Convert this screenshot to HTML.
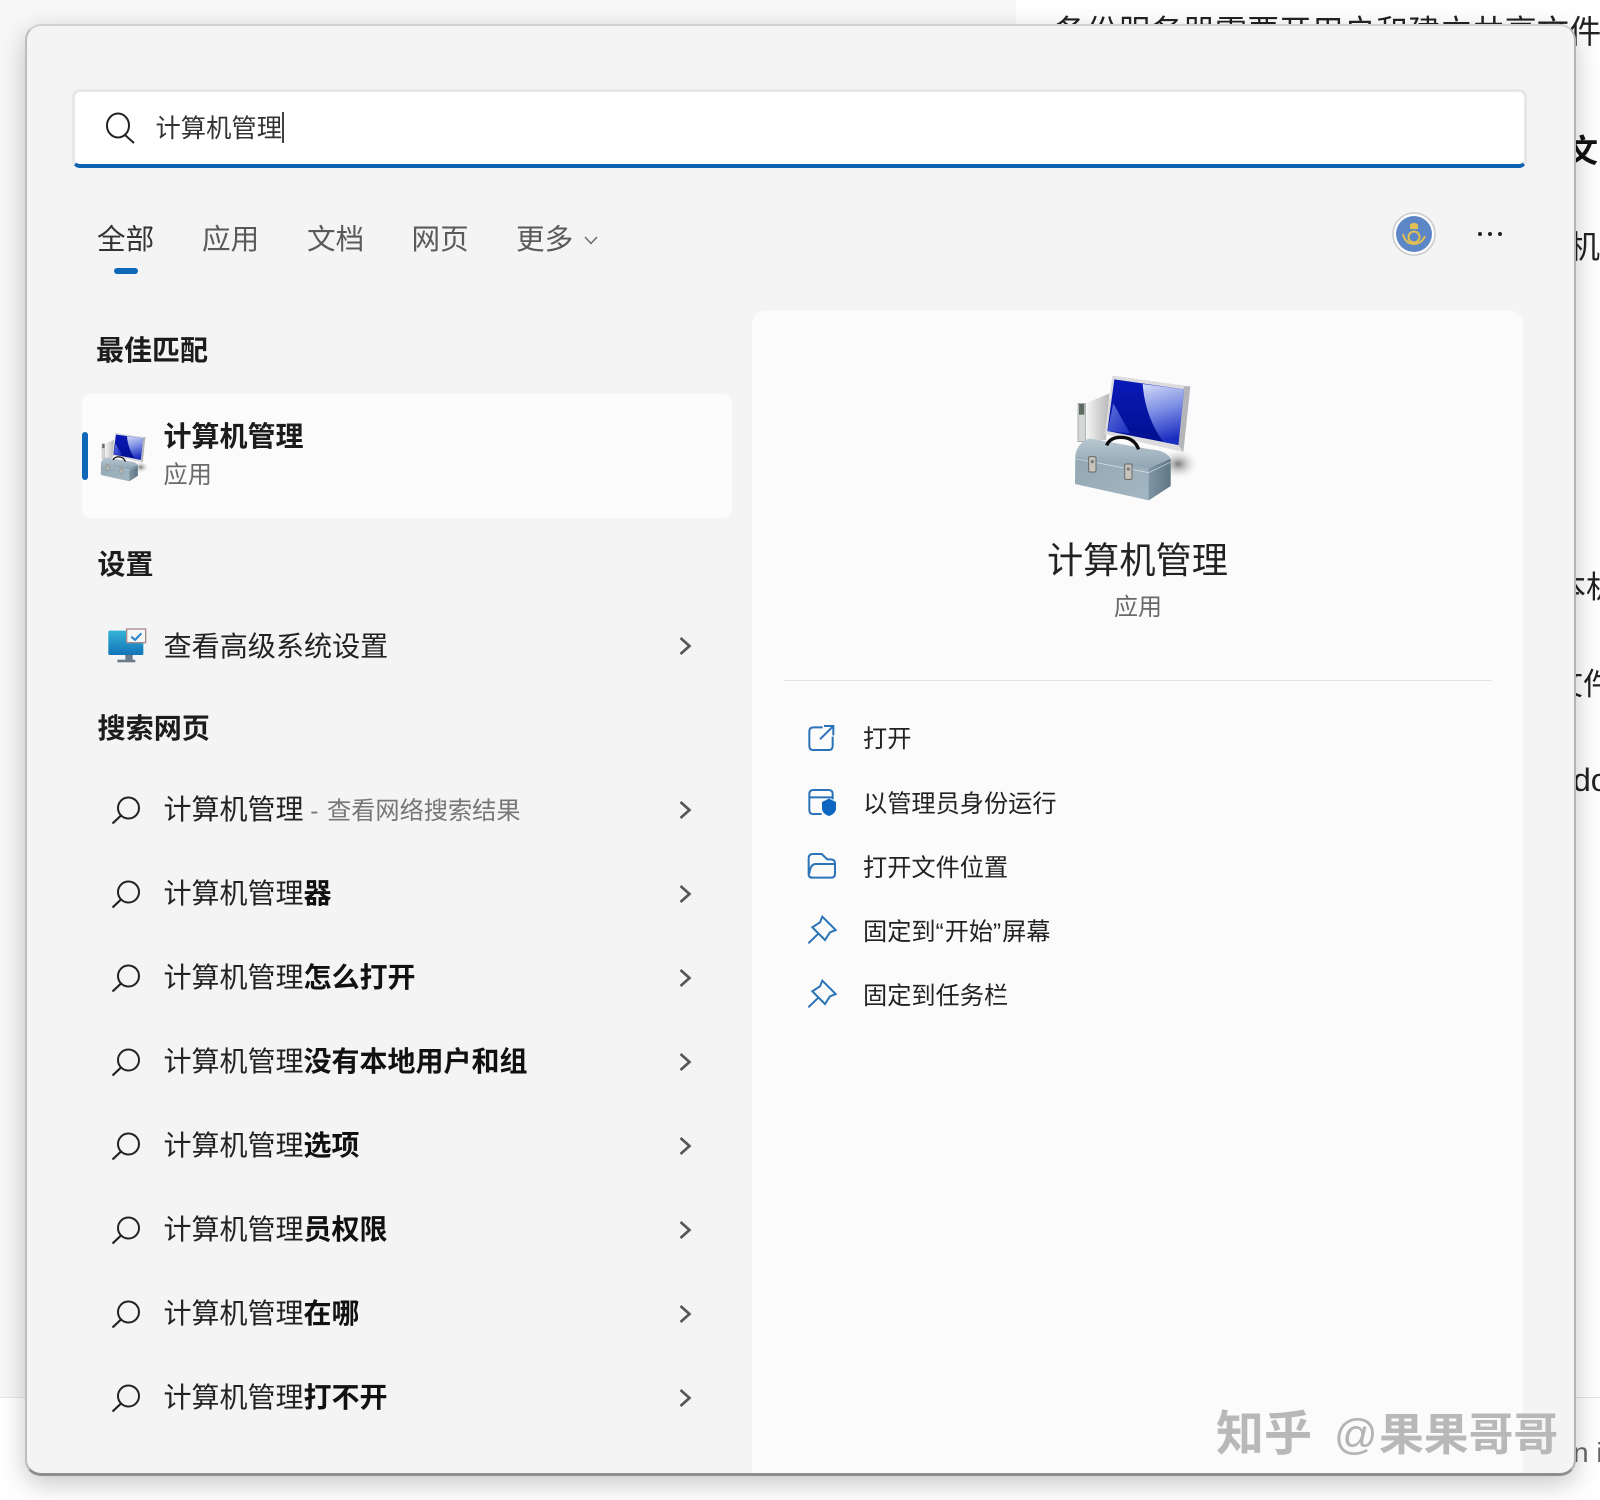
<!DOCTYPE html>
<html lang="zh-CN"><head><meta charset="utf-8"><title>计算机管理</title>
<style>
html,body{margin:0;padding:0;width:1600px;height:1500px;overflow:hidden;background:#fff}
body{position:relative;font-family:"Liberation Sans","Noto Sans CJK SC",sans-serif;color:#1c1c1c}
.t{position:absolute;white-space:nowrap;line-height:40px;height:40px}
.b{font-weight:700}
svg{position:absolute;overflow:visible}
#win{position:absolute;left:25px;top:24px;width:1547px;height:1447px;background:#f4f4f4;border-style:solid;border-width:2px 2px 3px 2px;border-color:#d2d2d2 #b4b4b4 #8e8e8e #bdbdbd;border-radius:16px;box-shadow:0 8px 26px rgba(0,0,0,.22)}
.bg{position:absolute}
</style></head><body>
<div class="bg" style="left:0;top:0;width:1016px;height:1397px;background:#f7f7f7"></div>
<div class="bg" style="left:0;top:1397px;width:1600px;height:1px;background:#e4e4e4"></div>
<div class="t" style="left:1054px;top:12px;font-size:32.200px;color:#222">备份服务器需要开用户和建立共享文件</div>
<div class="t b" style="left:1566px;top:131px;font-size:32px;color:#111">文</div>
<div class="t" style="left:1568px;top:227px;font-size:32px;color:#222">机</div>
<div class="t" style="left:1555px;top:568px;font-size:31px;color:#222">本机</div>
<div class="t" style="left:1552px;top:665px;font-size:31px;color:#222">文件</div>
<div class="t" style="left:1573px;top:760px;font-size:32px;color:#222">do</div>
<div class="t" style="left:1573px;top:1433px;font-size:28px;color:#666">n i</div>

<div id="win"></div>
<div class="bg" style="left:752px;top:310px;width:771px;height:1163px;background:#fbfbfb;border-radius:14px 14px 0 0"></div>

<!-- Search box -->
<div class="bg" style="left:72px;top:89px;width:1449px;height:72px;background:#fff;border:3px solid #e7e7e7;border-bottom:4px solid #0f62b0;border-radius:8px"></div>
<svg style="left:0;top:0" width="1600" height="1500" viewBox="0 0 1600 1500" fill="none">
<ellipse cx="118" cy="125.500" rx="11" ry="12" stroke="#222" stroke-width="2"/><path d="M125 135L134 143" stroke="#222" stroke-width="2"/>
<path d="M283 112V143" stroke="#111" stroke-width="1.600"/>
<path d="M585 237L591 243.500L597 237" stroke="#666" stroke-width="1.400"/>
</svg>
<div class="t" style="left:155.500px;top:109px;font-size:25.300px;color:#333">计算机管理</div>

<!-- Tabs -->
<div class="t" style="left:97px;top:220px;font-size:28.600px;color:#333">全部</div>
<div class="t" style="left:202px;top:220px;font-size:28.600px;color:#5a5a5a">应用</div>
<div class="t" style="left:307px;top:220px;font-size:28.600px;color:#5a5a5a">文档</div>
<div class="t" style="left:411.500px;top:220px;font-size:28.600px;color:#5a5a5a">网页</div>
<div class="t" style="left:516px;top:220px;font-size:28.600px;color:#5a5a5a">更多</div>
<div class="bg" style="left:114px;top:268px;width:24px;height:6px;border-radius:3px;background:#0f67b8"></div>

<!-- Avatar & dots -->
<svg style="left:1390px;top:210px" width="48" height="48" viewBox="0 0 48 48" fill="none">
<circle cx="24" cy="24" r="21" fill="#fff" stroke="#cfcfcf" stroke-width="1.800"/>
<circle cx="24" cy="24" r="18" fill="#5d86c6"/>
<circle cx="24" cy="27" r="5.500" stroke="#e2bf52" stroke-width="2"/>
<path d="M13 24Q15 33.500 24 34Q32 33.500 35 26" stroke="#e2bf52" stroke-width="2"/>
<path d="M20 19V14.500Q24 11 28 14.500V19Z" fill="#e2bf52"/>
</svg>
<svg style="left:1470px;top:226px" width="40" height="16" viewBox="0 0 40 16" fill="#222">
<circle cx="10" cy="8" r="2"/><circle cx="20" cy="8" r="2"/><circle cx="30" cy="8" r="2"/>
</svg>

<!-- Left column -->
<div class="t b" style="left:96px;top:331px;font-size:28px">最佳匹配</div>
<div class="bg" style="left:82px;top:394px;width:650px;height:124px;background:#fbfbfb;border-radius:8px"></div>
<div class="bg" style="left:82px;top:432px;width:6px;height:48px;border-radius:3px;background:#0f67b8"></div>
<div class="t b" style="left:163.500px;top:417px;font-size:28px">计算机管理</div>
<div class="t" style="left:163.500px;top:455.500px;font-size:24.200px;color:#6a6a6a">应用</div>

<div class="t b" style="left:97.500px;top:545px;font-size:28px">设置</div>
<div class="t" style="left:163.500px;top:627px;font-size:28.100px;color:#222">查看高级系统设置</div>
<div class="t b" style="left:97.500px;top:709px;font-size:28.100px">搜索网页</div>

<div class="t" style="left:163.500px;top:790px;font-size:28px;color:#222">计算机管理<span style="font-size:24.200px;color:#767676"> - <span style="margin-left:2px">查看网络搜索结果</span></span></div>
<div class="t" style="left:163.500px;top:874px;font-size:28px;color:#222">计算机管理<b style="color:#111">器</b></div>
<div class="t" style="left:163.500px;top:958px;font-size:28px;color:#222">计算机管理<b style="color:#111">怎么打开</b></div>
<div class="t" style="left:163.500px;top:1042px;font-size:28px;color:#222">计算机管理<b style="color:#111">没有本地用户和组</b></div>
<div class="t" style="left:163.500px;top:1126px;font-size:28px;color:#222">计算机管理<b style="color:#111">选项</b></div>
<div class="t" style="left:163.500px;top:1210px;font-size:28px;color:#222">计算机管理<b style="color:#111">员权限</b></div>
<div class="t" style="left:163.500px;top:1294px;font-size:28px;color:#222">计算机管理<b style="color:#111">在哪</b></div>
<div class="t" style="left:163.500px;top:1378px;font-size:28px;color:#222">计算机管理<b style="color:#111">打不开</b></div>

<svg style="left:0;top:0" width="1600" height="1500" viewBox="0 0 1600 1500" fill="none">
<defs>
<g id="mag"><circle cx="128.500" cy="-1" r="10.500" stroke="#222" stroke-width="2"/><path d="M121 6.500L112.500 14.500" stroke="#222" stroke-width="2.200"/></g>
<path id="chev" d="M680.500 -8L689.500 0L680.500 8" stroke="#555" stroke-width="2.600"/>
</defs>
<use href="#mag" y="809"/><use href="#mag" y="893"/><use href="#mag" y="977"/><use href="#mag" y="1061"/><use href="#mag" y="1145"/><use href="#mag" y="1229"/><use href="#mag" y="1313"/><use href="#mag" y="1397"/>
<use href="#chev" y="646"/><use href="#chev" y="810"/><use href="#chev" y="894"/><use href="#chev" y="978"/><use href="#chev" y="1062"/><use href="#chev" y="1146"/><use href="#chev" y="1230"/><use href="#chev" y="1314"/><use href="#chev" y="1398"/>
</svg>

<!-- Settings icon -->
<svg style="left:80px;top:600px" width="260" height="240" viewBox="0 0 780 720" fill="none">
<defs><linearGradient id="mon" x1="0" y1="0" x2="0" y2="1"><stop offset="0" stop-color="#35b4d6"/><stop offset="1" stop-color="#1273b8"/></linearGradient></defs>
<rect x="85" y="92" width="105" height="73" rx="4" fill="url(#mon)"/>
<rect x="136" y="165" width="22" height="16" fill="#6b7d8c"/>
<rect x="112" y="179" width="54" height="8" fill="#6b7d8c"/>
<rect x="140" y="87" width="57" height="41" fill="#f6f6f6" stroke="#a58a8a" stroke-width="4"/>
<path d="M154 110L165 120L184 100" stroke="#2c80c4" stroke-width="6"/>
</svg>

<!-- Toolbox icons -->
<svg style="left:1050px;top:360px" width="170" height="150" viewBox="0 0 510 450">
<defs>
<linearGradient id="scr" x1="0" y1="0" x2="0" y2="1"><stop offset="0" stop-color="#0a1ab8"/><stop offset="1" stop-color="#00108e"/></linearGradient>
<linearGradient id="hl" x1="0" y1="0" x2=".2" y2="1"><stop offset="0" stop-color="#d4dcf6"/><stop offset=".5" stop-color="#7a8ce4"/><stop offset="1" stop-color="#1c2ec0"/></linearGradient>
<linearGradient id="st" x1="0" y1="0" x2="1" y2="1"><stop offset="0" stop-color="#5f74dc"/><stop offset="1" stop-color="#1a2cc0"/></linearGradient>
<linearGradient id="lid" x1="0" y1="0" x2="0" y2="1"><stop offset="0" stop-color="#b9c9d2"/><stop offset="1" stop-color="#8fa5b2"/></linearGradient>
<linearGradient id="frt" x1="0" y1="0" x2="1" y2="1"><stop offset="0" stop-color="#8fa4b0"/><stop offset="1" stop-color="#a6bac5"/></linearGradient>
<linearGradient id="rgt" x1="0" y1="0" x2="1" y2="0"><stop offset="0" stop-color="#7f95a3"/><stop offset="1" stop-color="#5f7684"/></linearGradient>
<linearGradient id="sha" x1="0" y1="0" x2="1" y2="0"><stop offset="0" stop-color="#f5f5f5"/><stop offset="1" stop-color="#b8b8b8"/></linearGradient>
<radialGradient id="sh2"><stop offset="0" stop-color="#7c7c7c"/><stop offset="1" stop-color="#fbfbfb" stop-opacity="0"/></radialGradient>
<g id="tb">
<ellipse cx="385" cy="312" rx="64" ry="48" fill="url(#sh2)"/>
<polygon points="108,130 178,100 168,240 108,245" fill="url(#sha)"/>
<rect x="84" y="130" width="22" height="115" fill="#d4d6d7" stroke="#8f9698" stroke-width="2"/>
<rect x="87" y="132" width="16" height="32" fill="#5e6a60"/>
<polygon points="187,47 421,79 400,276 164,222" fill="#dcdcde"/>
<polygon points="402,79 421,79 400,276 385,255" fill="#b4b6ba"/>
<polygon points="193,58 402,88 385,255 172,213" fill="url(#scr)"/>
<path d="M278 72L402 88L385 255L340 246Q285 170 278 72Z" fill="url(#hl)"/>
<polygon points="190,130 240,220 172,213" fill="url(#st)"/>
<path d="M76 290Q80 250 118 236L300 268Q355 272 362 300L362 378L296 421L75 372Z" fill="url(#frt)"/>
<path d="M76 290Q80 250 118 236L300 268Q350 272 362 300L296 326Z" fill="url(#lid)"/>
<polygon points="296,326 362,296 362,378 296,421" fill="url(#rgt)"/>
<path d="M76 296L296 338L362 306" fill="none" stroke="#dde5ea" stroke-width="2"/>
<path d="M170 256Q180 232 212 232Q252 232 266 268" fill="none" stroke="#0c0c0c" stroke-width="10"/>
<rect x="116" y="290" width="22" height="46" rx="4" fill="#c8c4bc" stroke="#66686a" stroke-width="3"/>
<rect x="224" y="312" width="22" height="46" rx="4" fill="#c8c4bc" stroke="#66686a" stroke-width="3"/>
<circle cx="127" cy="305" r="5" fill="#77797b"/><circle cx="235" cy="327" r="5" fill="#77797b"/>
</g>
</defs>
<use href="#tb"/>
</svg>
<svg style="left:91px;top:427px" width="66" height="58" viewBox="0 0 510 450"><use href="#tb"/></svg>

<!-- Right pane -->
<div class="t" style="left:1047px;top:540.500px;font-size:36.200px;color:#222">计算机管理</div>
<div class="t" style="left:1114px;top:587.500px;font-size:24px;color:#6a6a6a">应用</div>
<div class="bg" style="left:784px;top:680px;width:708px;height:1px;background:#e3e3e3"></div>

<svg style="left:780px;top:700px" width="300" height="320" viewBox="0 0 900 960" fill="none" stroke="#2b73b8" stroke-width="6">
<path d="M128 82H100Q88 82 88 94V138Q88 150 100 150H146Q158 150 158 138V110"/>
<path d="M120 118L158 80M132 78H160V106"/>
<path d="M125 342H100Q88 342 88 330V282Q88 270 100 270H146Q158 270 158 282V298M88 292H158"/>
<path d="M147 296L168 306V325Q168 340 147 348Q126 340 126 325V306Z" fill="#0f66c0" stroke="none"/>
<path d="M86 520V475Q86 462 98 462H125L142 478H152Q165 478 165 490V522Q165 533 153 533H97Q85 533 86 520Z"/>
<path d="M88 522Q90 492 108 492H165"/>
<path d="M127 650L167 690L150 697L135 720L97 682L120 667ZM85 730L116 700"/>
<path d="M127 842L167 882L150 889L135 912L97 874L120 859ZM85 922L116 892"/>
</svg>
<div class="t" style="left:863px;top:720px;font-size:24.200px;color:#222">打开</div>
<div class="t" style="left:863px;top:784.500px;font-size:24.200px;color:#222">以管理员身份运行</div>
<div class="t" style="left:863px;top:848.500px;font-size:24.200px;color:#222">打开文件位置</div>
<div class="t" style="left:863px;top:913px;font-size:24.200px;color:#222">固定到<span style="letter-spacing:1px">“</span>开始<span style="letter-spacing:1px">”</span>屏幕</div>
<div class="t" style="left:863px;top:977px;font-size:24.200px;color:#222">固定到任务栏</div>

<!-- Watermark -->
<div class="t b" style="left:1216px;top:1415px;font-size:48px;color:#b8b8b8">知乎</div>
<div class="t" style="left:1334px;top:1415px;font-size:43px;color:#b4b4b4">@</div>
<div class="t b" style="left:1379px;top:1415px;font-size:44.800px;color:#b8b8b8">果果哥哥</div>
</body></html>
